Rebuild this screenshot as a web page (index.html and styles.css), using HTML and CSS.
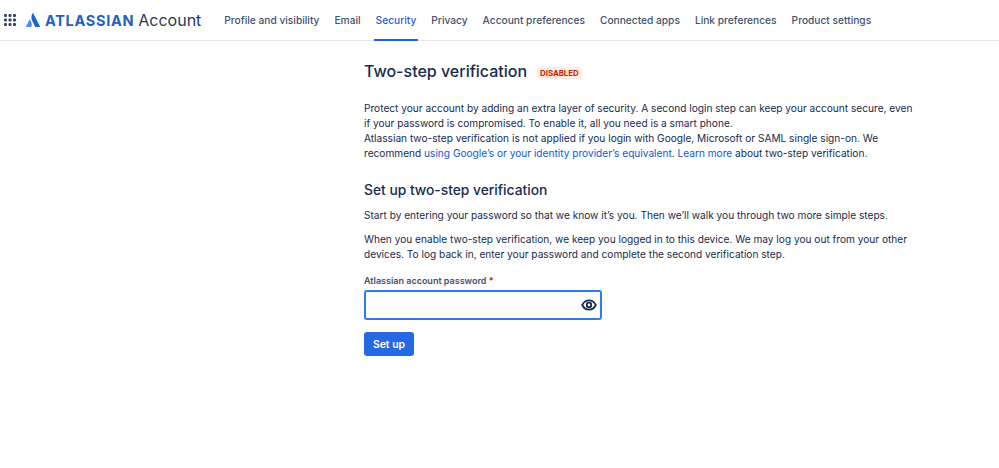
FILE: index.html
```html
<!DOCTYPE html>
<html lang="en">
<head>
    <meta charset="UTF-8">
    <title>Two-step verification</title>
    <link rel="stylesheet" href="styles.css">
</head>
<body>
    <header class="topbar">
        <svg class="apps" width="12" height="12" viewBox="0 0 12 12" fill="#344563">
            <rect x="0" y="0" width="3" height="3" rx="1"/><rect x="4.5" y="0" width="3" height="3" rx="1"/><rect x="9" y="0" width="3" height="3" rx="1"/>
            <rect x="0" y="4.5" width="3" height="3" rx="1"/><rect x="4.5" y="4.5" width="3" height="3" rx="1"/><rect x="9" y="4.5" width="3" height="3" rx="1"/>
            <rect x="0" y="9" width="3" height="3" rx="1"/><rect x="4.5" y="9" width="3" height="3" rx="1"/><rect x="9" y="9" width="3" height="3" rx="1"/>
        </svg>
        <div class="logo">
            <svg width="14" height="14" viewBox="0 0 14 14">
                <path fill="#4c8cf5" d="M4 6.8c-.2-.3-.5-.2-.7.1L0 13.4c-.1.3 0 .6.4.6h4.500c.2 0 .3-.1.4-.2 1-2 .4-5-1.300-7z"/>
                <path fill="#1f62d8" d="M6.600.3C5 2.900 5.100 5.700 6.200 7.800l2.900 5.900c.1.200.2.300.4.300h4.100c.3 0 .5-.3.400-.6L7.200.3c-.1-.3-.5-.3-.6 0z"/>
            </svg>
            <span class="logo-name">ATLASSIAN</span>
            <span class="logo-product">Account</span>
        </div>
        <nav class="tabs">
            <a class="tab" href="#">Profile and visibility</a>
            <a class="tab" href="#">Email</a>
            <a class="tab active" href="#">Security</a>
            <a class="tab" href="#">Privacy</a>
            <a class="tab" href="#">Account preferences</a>
            <a class="tab" href="#">Connected apps</a>
            <a class="tab" href="#">Link preferences</a>
            <a class="tab" href="#">Product settings</a>
        </nav>
    </header>

    <main class="content">
        <div class="title-row">
            <h1>Two-step verification</h1>
            <span class="lozenge">DISABLED</span>
        </div>

        <p class="intro">Protect your account by adding an extra layer of security. A second login step can keep your account secure, even if your password is compromised. To enable it, all you need is a smart phone.<br>
        Atlassian two-step verification is not applied if you login with Google, Microsoft or SAML single sign-on. We recommend <a href="#">using Google’s or your identity provider’s equivalent</a>. <a href="#">Learn more</a> about two-step verification.</p>

        <h2>Set up two-step verification</h2>
        <p class="step">Start by entering your password so that we know it’s you. Then we’ll walk you through two more simple steps.</p>
        <p class="step">When you enable two-step verification, we keep you logged in to this device. We may log you out from your other devices. To log back in, enter your password and complete the second verification step.</p>

        <label class="field-label" for="password">Atlassian account password <span class="required">*</span></label>
        <div class="password-field">
            <input type="password" id="password">
            <svg width="20" height="20" viewBox="0 0 20 20" fill="none" stroke="#172b4d">
                <path stroke-width="1.800" d="M3.200 10C4.600 7.200 7 5.300 10 5.300s5.400 1.900 6.800 4.700c-1.400 2.800-3.800 4.700-6.800 4.700S4.600 12.800 3.200 10z"/>
                <circle cx="10" cy="10" r="2.300" stroke-width="1.800"/>
            </svg>
        </div>
        <button class="primary">Set up</button>
    </main>
</body>
</html>
```

FILE: styles.css
```css
* {
    margin: 0;
    padding: 0;
    box-sizing: border-box;
}

body {
    font-family: Inter, 'Liberation Sans', sans-serif;
    font-size: 10.15px;
    line-height: 15px;
    color: #172b4d;
    background: white;
}

a {
    color: #0b5bd3;
    text-decoration: none;
}

/* Top bar */
.topbar {
    height: 41px;
    display: flex;
    align-items: center;
    padding-left: 4px;
    border-bottom: 1px solid #e4e6ea;
}

.apps {
    margin-right: 10px;
}

.logo {
    display: flex;
    align-items: center;
    margin-right: 21px;
}

.logo svg {
    margin-right: 5px;
}

.logo-name {
    font-size: 14.5px;
    font-weight: 700;
    letter-spacing: 0.7px;
    color: #1f5fc4;
    margin-right: 4px;
}

.logo-product {
    font-size: 16px;
    color: #253858;
}

.tabs {
    display: flex;
    align-self: stretch;
    gap: 11px;
}

.tab {
    display: flex;
    align-items: center;
    padding: 2px 2px 0;
    color: #42526e;
    font-size: 10.2px;
    font-weight: 500;
    border-bottom: 2px solid transparent;
    height: 41px;
}

.tab.active {
    color: #1f62d8;
    border-bottom-color: #1f62d8;
}

/* Main content */
.content {
    width: 552px;
    margin-left: 364px;
}

.title-row {
    display: flex;
    align-items: center;
    gap: 10px;
    margin-top: 18px;
    height: 24px;
}

h1 {
    font-size: 16px;
    font-weight: 500;
    line-height: 24px;
}

.lozenge {
    margin-top: 3px;
    padding: 0 3px;
    font-size: 7.8px;
    line-height: 12px;
    font-weight: 700;
    color: #bf2600;
    background: #ffebe6;
    border-radius: 3px;
}

.intro {
    margin-top: 18px;
}

h2 {
    margin-top: 19px;
    font-size: 13.8px;
    font-weight: 500;
    line-height: 20px;
}

.step {
    margin-top: 9px;
}

h2 + .step {
    margin-top: 8px;
}

.field-label {
    display: block;
    margin-top: 13px;
    font-size: 9px;
    line-height: 12px;
    font-weight: 600;
    color: #42526e;
}

.required {
    color: #bf2600;
}

.password-field {
    display: flex;
    align-items: center;
    width: 238px;
    height: 30px;
    margin-top: 3px;
    padding-right: 1px;
    border: 2px solid #2f7de8;
    border-radius: 3px;
}

.password-field input {
    flex: 1;
    min-width: 0;
    border: none;
    outline: none;
    background: transparent;
}

.primary {
    display: block;
    margin-top: 12px;
    width: 50px;
    height: 24px;
    border: none;
    border-radius: 3px;
    background: #2568e3;
    color: white;
    font-family: inherit;
    font-size: 10.4px;
    font-weight: 600;
}
```
